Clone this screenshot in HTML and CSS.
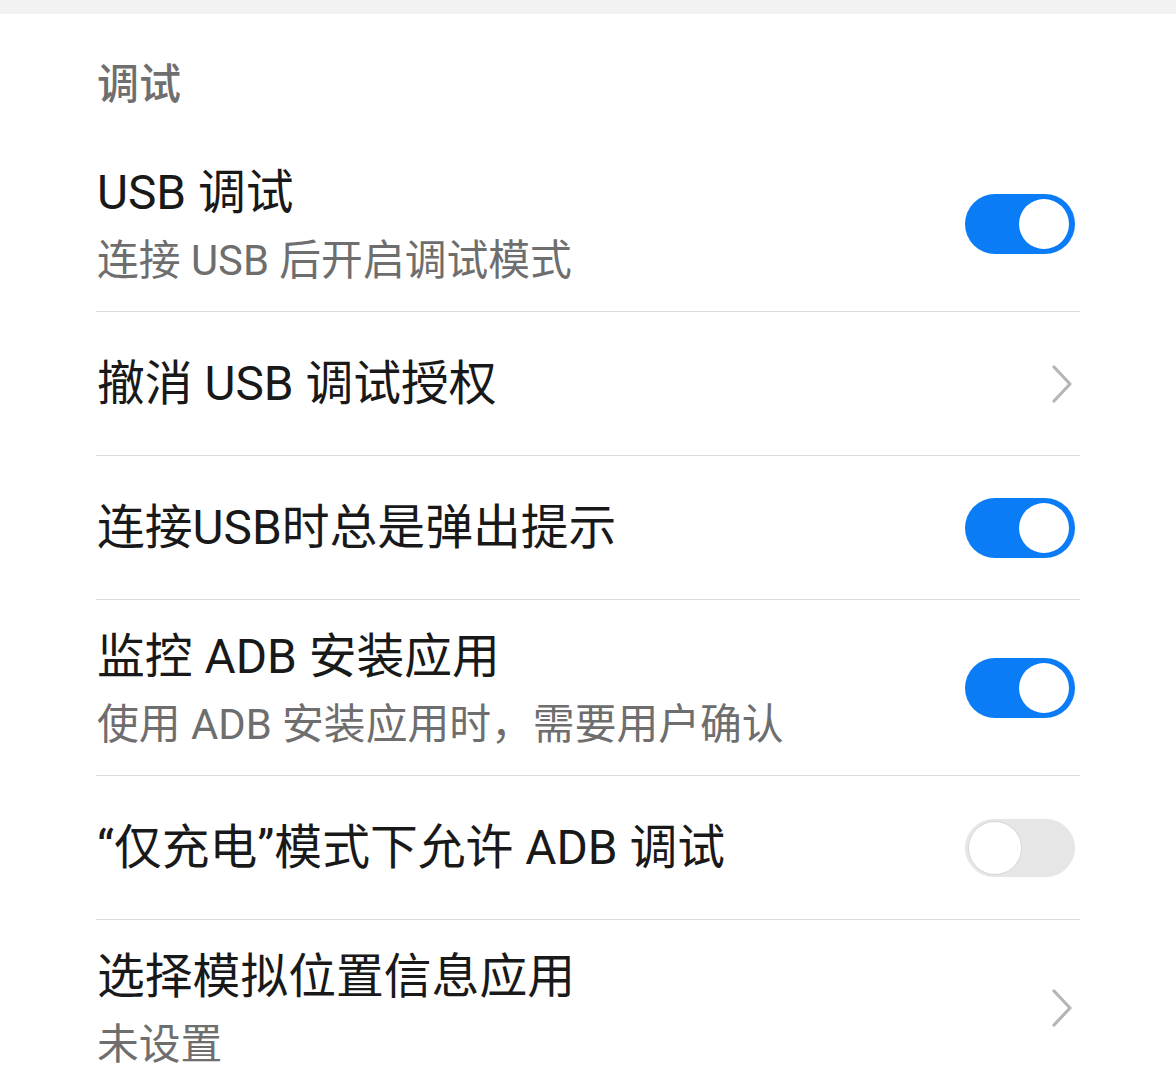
FILE: index.html
```html
<!DOCTYPE html>
<html lang="zh-CN">
<head>
    <meta charset="UTF-8">
    <meta name="viewport" content="width=device-width, initial-scale=1.0">
    <title>开发人员选项 - 调试</title>
    <link rel="stylesheet" href="styles.css">
</head>
<body>
    <div class="top-bar"></div>

    <div class="section">
        <div class="section-title">调试</div>

        <ul class="list">
            <li class="item">
                <div class="text two-line">
                    <div class="title">USB 调试</div>
                    <div class="sub">连接 USB 后开启调试模式</div>
                </div>
                <span class="switch on"></span>
            </li>
            <li class="item">
                <div class="text">
                    <div class="title">撤消 USB 调试授权</div>
                </div>
                <svg class="chevron" viewBox="0 0 22 40" width="22" height="40">
                    <path d="M3 3 L19 20 L3 37" fill="none" stroke="#b5b5b5" stroke-width="3.2" stroke-linecap="round" stroke-linejoin="round"/>
                </svg>
            </li>
            <li class="item">
                <div class="text">
                    <div class="title">连接USB时总是弹出提示</div>
                </div>
                <span class="switch on"></span>
            </li>
            <li class="item">
                <div class="text two-line">
                    <div class="title">监控 ADB 安装应用</div>
                    <div class="sub">使用 ADB 安装应用时，需要用户确认</div>
                </div>
                <span class="switch on"></span>
            </li>
            <li class="item">
                <div class="text">
                    <div class="title">“仅充电”模式下允许 ADB 调试</div>
                </div>
                <span class="switch"></span>
            </li>
            <li class="item last">
                <div class="text two-line">
                    <div class="title">选择模拟位置信息应用</div>
                    <div class="sub">未设置</div>
                </div>
                <svg class="chevron" viewBox="0 0 22 40" width="22" height="40">
                    <path d="M3 3 L19 20 L3 37" fill="none" stroke="#b5b5b5" stroke-width="3.2" stroke-linecap="round" stroke-linejoin="round"/>
                </svg>
            </li>
        </ul>
    </div>
</body>
</html>
```

FILE: styles.css
```css
:root {
    --blue: #0a7df6;
    --text: #191919;
    --sub-text: #6e6e6e;
    --divider: #dcdcdc;
}

* {
    box-sizing: border-box;
    margin: 0;
    padding: 0;
    font-family: Roboto, 'Noto Sans CJK SC', sans-serif;
}

body {
    background: #fff;
    width: 1176px;
    height: 1082px;
    overflow: hidden;
}

.top-bar {
    height: 14px;
    background: #f2f2f2;
}

.section {
    padding: 0 96px;
}

.section-title {
    height: 122px;
    padding-top: 43px;
    padding-left: 1px;
    font-size: 42px;
    line-height: 56px;
    font-weight: 500;
    color: #6f6f6f;
}

.list {
    list-style: none;
}

.item {
    display: flex;
    align-items: center;
    justify-content: space-between;
    border-bottom: 1px solid var(--divider);
}

.item.last {
    border-bottom: none;
}

.text {
    padding: 38px 0 37px 1px;
}

.text.two-line {
    padding: 23px 0 16px 1px;
}

.title {
    font-size: 47.8px;
    line-height: 68px;
    color: var(--text);
}

.sub {
    font-size: 41.8px;
    line-height: 68px;
    color: var(--sub-text);
}

.switch {
    position: relative;
    width: 110px;
    height: 58px;
    margin-right: 5px;
    border-radius: 29px;
    background: #e6e6e6;
    flex-shrink: 0;
}

.switch::after {
    content: '';
    position: absolute;
    top: 3px;
    left: 4px;
    width: 52px;
    height: 52px;
    border-radius: 50%;
    background: #fff;
    box-shadow: 0 0 0 1px #d8d8d8;
}

.switch.on {
    height: 60px;
    border-radius: 30px;
    background: var(--blue);
}

.switch.on::after {
    top: 5px;
    left: 54px;
    width: 50px;
    height: 50px;
    box-shadow: none;
}

.chevron {
    margin-right: 7px;
    flex-shrink: 0;
}
```
